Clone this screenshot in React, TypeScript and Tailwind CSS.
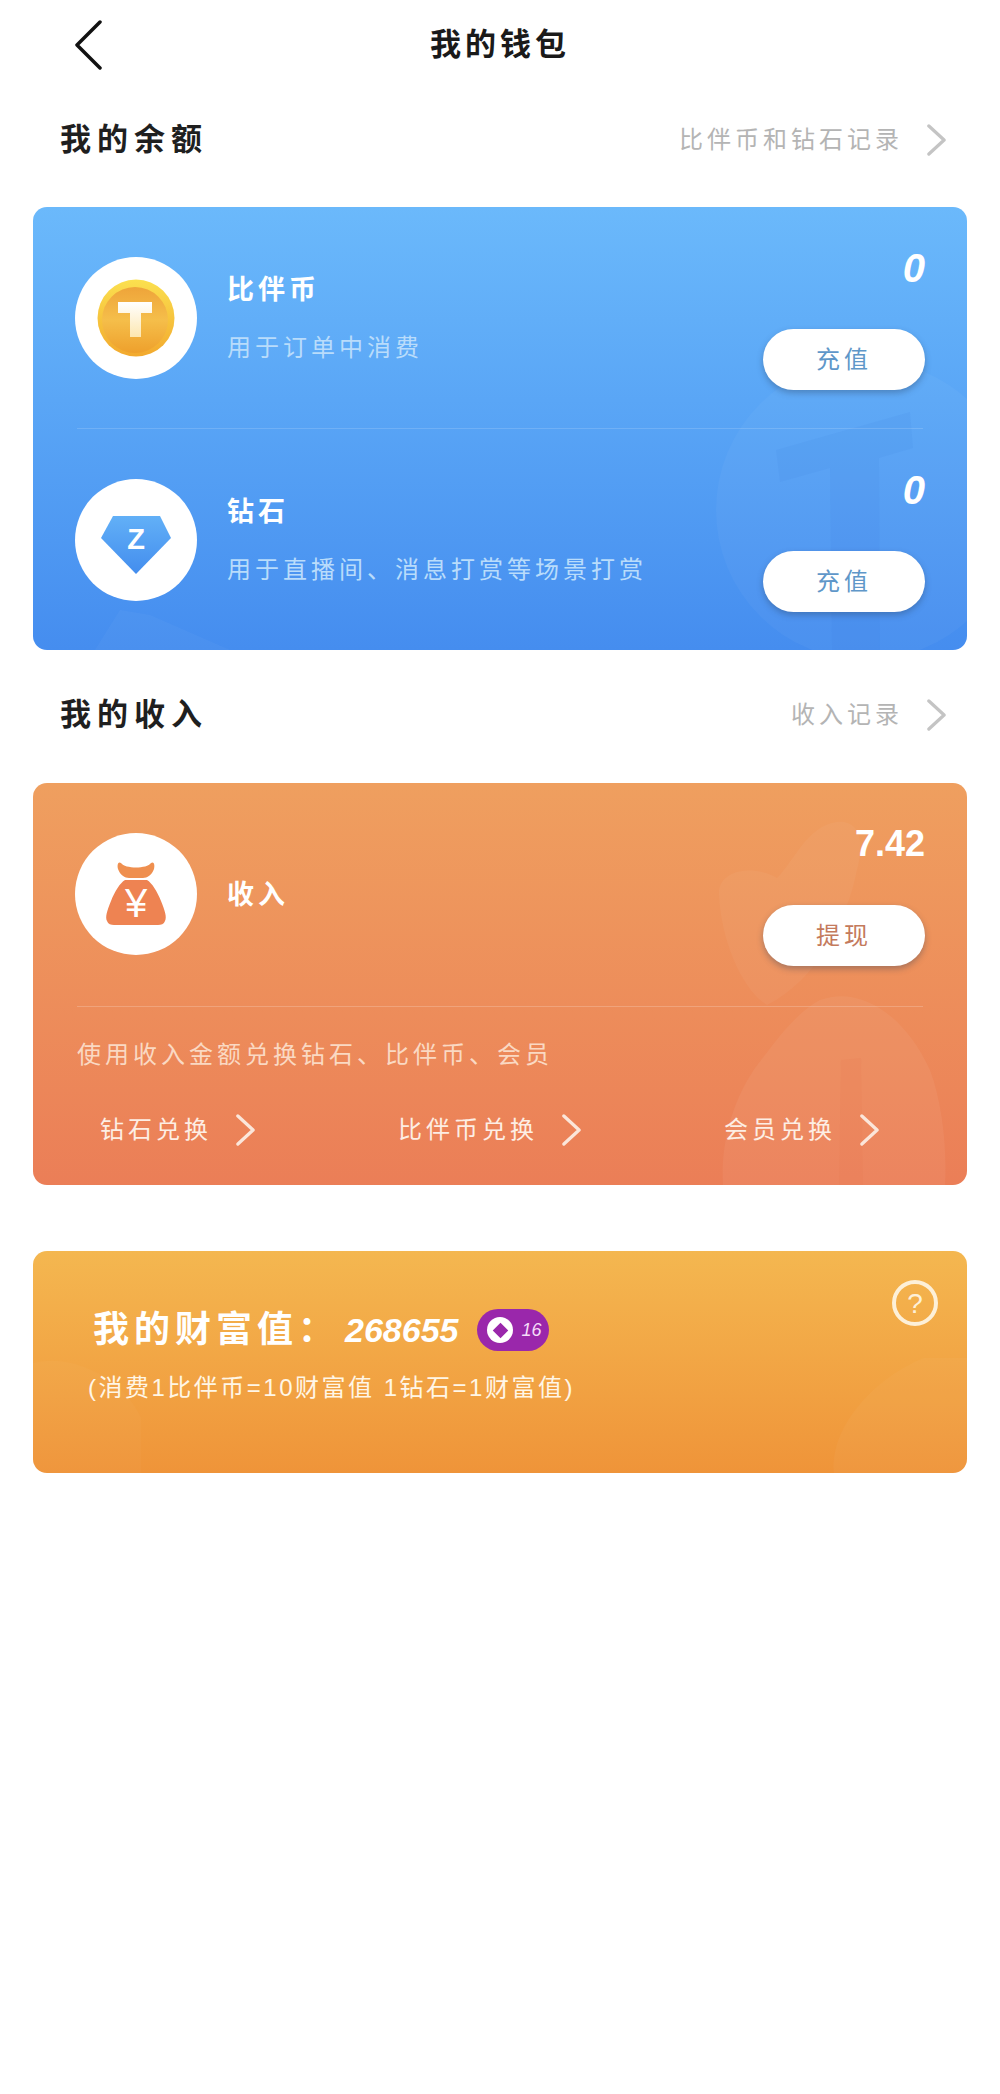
import React from 'react'

const Chevron = ({ className, stroke, width = 3 }: { className: string; stroke: string; width?: number }) => (
  <svg className={className} viewBox="0 0 20 32" fill="none" preserveAspectRatio="none">
    <path d="M2 2L18 16L2 30" stroke={stroke} strokeWidth={width} strokeLinecap="round" strokeLinejoin="round" />
  </svg>
)

const Coin = () => (
  <svg className="w-[78px] h-[78px]" viewBox="0 0 78 78">
    <defs>
      <linearGradient id="coinRim" x1="0" y1="0" x2="0" y2="1">
        <stop offset="0" stopColor="#fbe04f" />
        <stop offset="1" stopColor="#f2a92e" />
      </linearGradient>
      <linearGradient id="coinFace" x1="0" y1="0" x2="0" y2="1">
        <stop offset="0" stopColor="#eea43a" />
        <stop offset="0.5" stopColor="#f5be4a" />
        <stop offset="1" stopColor="#eea02c" />
      </linearGradient>
      <linearGradient id="coinT" x1="0" y1="0" x2="0" y2="1">
        <stop offset="0" stopColor="#ffffff" />
        <stop offset="1" stopColor="#fde7b0" />
      </linearGradient>
    </defs>
    <circle cx="39" cy="39" r="38.5" fill="url(#coinRim)" />
    <circle cx="38" cy="41" r="33" fill="url(#coinFace)" />
    <path d="M21 23H55V34H44V58H33V34H21Z" fill="url(#coinT)" />
  </svg>
)

const Diamond = () => (
  <svg className="mt-[9px] w-[70px] h-[60px]" viewBox="0 0 70 60">
    <defs>
      <linearGradient id="gem" x1="0" y1="0" x2="0" y2="1">
        <stop offset="0" stopColor="#62b0f7" />
        <stop offset="1" stopColor="#438dee" />
      </linearGradient>
    </defs>
    <path d="M12 1H59L70 23L35 59L0 23Z" fill="url(#gem)" />
    <text x="35" y="34" textAnchor="middle" fill="#fff" fontSize="29" fontWeight="700" fontFamily="Liberation Sans, sans-serif">Z</text>
  </svg>
)

const MoneyBag = () => (
  <svg className="w-[62px] h-[66px]" viewBox="0 0 62 66">
    <path d="M16 2C20 8 42 8 46 2C49 0 50 4 49 8C47 14 42 17 38 17H24C20 17 15 14 13 8C12 4 13 0 16 2Z" fill="#ef8f4f" />
    <path d="M20 19H42C47 22 52 30 56 40C60 50 62 56 60 60C59 63 56 64 53 64H9C6 64 3 63 2 60C0 56 2 50 6 40C10 30 15 22 20 19Z" fill="#ee8352" />
    <text x="31" y="56" textAnchor="middle" fill="#fff" fontSize="40" fontFamily="Liberation Sans, sans-serif">¥</text>
  </svg>
)

const SectionHeader = ({ title, link }: { title: string; link: string }) => (
  <div className="h-[100px] pl-[60px] pr-[54px] flex items-center justify-between">
    <span className="text-[31px] leading-10 tracking-[6px] font-bold text-[#1f1f1f]">{title}</span>
    <div className="flex items-center">
      <span className="text-[24px] leading-9 tracking-[4px] text-[#b4b4b4]">{link}</span>
      <Chevron className="ml-6 w-[19px] h-[32px]" stroke="#c4c4c4" width={3.5} />
    </div>
  </div>
)

const AssetRow = ({
  icon,
  title,
  desc,
  value,
  valueClass,
  action,
  actionColor,
  centered,
}: {
  icon: React.ReactNode
  title: string
  desc?: string
  value: string
  valueClass: string
  action: string
  actionColor: string
  centered?: boolean
}) => (
  <div className="h-[221px] pl-[42px] pr-[42px] flex items-start">
    <div className="mt-[50px] w-[122px] h-[122px] rounded-full bg-white flex items-center justify-center shrink-0">
      {icon}
    </div>
    <div className={centered ? 'ml-[30px] mt-[92px]' : 'ml-[30px] mt-[63px]'}>
      <div className="text-[27px] leading-10 tracking-[4px] font-bold text-white">{title}</div>
      {desc && <div className="mt-5 text-[24px] leading-9 tracking-[4px] text-[#b9dcfb]">{desc}</div>}
    </div>
    <div className="ml-auto mt-[41px] flex flex-col items-end">
      <div className={`h-10 leading-10 font-bold text-white ${valueClass}`}>{value}</div>
      <button
        type="button"
        className={`mt-[41px] w-[162px] h-[61px] rounded-full bg-white text-[24px] tracking-[4px] shadow-[0_3px_6px_rgba(40,60,90,0.35)] ${actionColor}`}
      >
        {action}
      </button>
    </div>
  </div>
)

const Exchange = ({ label }: { label: string }) => (
  <div className="flex items-center">
    <span className="text-[24px] leading-10 tracking-[4px] text-[#fdeee4]">{label}</span>
    <Chevron className="ml-[24px] w-[19px] h-[32px]" stroke="#fbe6da" width={3.5} />
  </div>
)

export default function App() {
  return (
    <div className="min-h-screen bg-white font-['Liberation_Sans','Noto_Sans_CJK_SC',sans-serif]">
      <header className="h-[90px] grid grid-cols-[1fr_auto_1fr] items-center">
        <svg className="ml-[75px] w-[27px] h-[50px]" viewBox="0 0 27 50" fill="none">
          <path d="M25 2L2 25L25 48" stroke="#111" strokeWidth="3.5" strokeLinecap="round" strokeLinejoin="round" />
        </svg>
        <h1 className="text-[31px] leading-10 tracking-[4px] font-bold text-[#1a1a1a]">我的钱包</h1>
        <div />
      </header>

      <SectionHeader title="我的余额" link="比伴币和钻石记录" />

      <section className="relative mt-[17px] ml-[33px] mr-[33px] rounded-[14px] overflow-hidden bg-gradient-to-b from-[#6bb9fb] to-[#458def]">
        <svg className="absolute right-0 bottom-0 w-[253px] h-[290px]" viewBox="0 0 253 290" fill="none">
          <circle cx="152" cy="150" r="150" fill="#ffffff" fillOpacity="0.035" />
          <path d="M62 90L196 52L199 88L165 98L166 290H118L116 108L66 122Z" fill="#2f73d8" fillOpacity="0.08" />
        </svg>
        <svg className="absolute left-[62px] bottom-0 w-[135px] h-[40px]" viewBox="0 0 135 40" fill="none">
          <path d="M0 40L25 0L55 5L135 40Z" fill="#ffffff" fillOpacity="0.03" />
        </svg>
        <div className="relative">
          <AssetRow
            icon={<Coin />}
            title="比伴币"
            desc="用于订单中消费"
            value="0"
            valueClass="text-[40px] italic"
            action="充值"
            actionColor="text-[#5f97c9]"
          />
          <div className="mx-[44px] h-px bg-white/15" />
          <AssetRow
            icon={<Diamond />}
            title="钻石"
            desc="用于直播间、消息打赏等场景打赏"
            value="0"
            valueClass="text-[40px] italic"
            action="充值"
            actionColor="text-[#5f97c9]"
          />
        </div>
      </section>

      <div className="mt-[15px]">
        <SectionHeader title="我的收入" link="收入记录" />
      </div>

      <section className="relative mt-[18px] ml-[33px] mr-[33px] h-[402px] rounded-[14px] overflow-hidden bg-gradient-to-b from-[#ef9f5f] to-[#eb7e57]">
        <svg className="absolute right-0 bottom-0 w-[260px] h-[365px]" viewBox="0 0 260 365" fill="none">
          <path d="M12 75C10 48 50 45 70 58C88 40 100 6 130 2C152 0 158 20 150 50C140 100 110 160 60 185C35 170 14 120 12 75Z" fill="#ffffff" fillOpacity="0.04" />
          <path d="M113 180C153 165 198 195 223 250C236 285 240 330 238 365H16C13 320 28 270 58 235C73 215 93 190 113 180Z" fill="#ffffff" fillOpacity="0.05" />
          <path d="M134 240L154 238L156 365H132Z" fill="#e6704e" fillOpacity="0.12" />
        </svg>
        <div className="relative">
          <AssetRow
            icon={<MoneyBag />}
            title="收入"
            value="7.42"
            valueClass="text-[36px]"
            action="提现"
            actionColor="text-[#c47a5c]"
            centered
          />
          <div className="mt-[2px] mx-[44px] h-px bg-white/20" />
          <p className="mt-[30px] pl-[44px] text-[24px] leading-9 tracking-[4px] text-[#fad9c3]">
            使用收入金额兑换钻石、比伴币、会员
          </p>
          <div className="mt-[37px] pl-[67px] pr-[88px] flex justify-between">
            <Exchange label="钻石兑换" />
            <Exchange label="比伴币兑换" />
            <Exchange label="会员兑换" />
          </div>
        </div>
      </section>

      <section className="relative mt-[66px] ml-[33px] mr-[33px] h-[222px] rounded-[14px] overflow-hidden bg-gradient-to-b from-[#f4b750] to-[#ef9439]">
        <svg className="absolute inset-x-0 bottom-0 w-full h-[115px]" viewBox="0 0 933 115" fill="none" preserveAspectRatio="none">
          <path d="M0 5C40 -5 90 20 108 60V115H0Z" fill="#ffffff" fillOpacity="0.025" />
          <path d="M800 115C795 70 840 20 890 0H933V115Z" fill="#ffffff" fillOpacity="0.03" />
        </svg>
        <svg className="absolute top-[29px] right-[29px] w-[46px] h-[46px]" viewBox="0 0 46 46" fill="none">
          <circle cx="23" cy="23" r="21" stroke="#fdf0d8" strokeWidth="4" />
          <text x="23" y="33" textAnchor="middle" fill="#fdf0d8" fontSize="28" fontFamily="Liberation Sans, sans-serif">?</text>
        </svg>
        <div className="relative pt-[57px] pl-[60px] flex items-center">
          <span className="text-[36px] leading-[44px] tracking-[5px] font-bold text-white">
            我的财富值：<span className="ml-[6px] text-[34px] italic tracking-normal">268655</span>
          </span>
          <div className="ml-[19px] w-[72px] h-[42px] rounded-full bg-[#9a27ab] flex items-center pl-[10px] gap-[8px]">
            <div className="w-[26px] h-[26px] rounded-full bg-white flex items-center justify-center">
              <div className="w-[11px] h-[11px] rotate-45 bg-[#9a27ab]" />
            </div>
            <span className="text-[18px] italic leading-none text-[#f5dcf8]">16</span>
          </div>
        </div>
        <p className="relative mt-[18px] pl-[55px] text-[24px] leading-9 tracking-[2.5px] text-[#fff6e6]">
          (消费1比伴币=10财富值 1钻石=1财富值)
        </p>
      </section>
    </div>
  )
}
